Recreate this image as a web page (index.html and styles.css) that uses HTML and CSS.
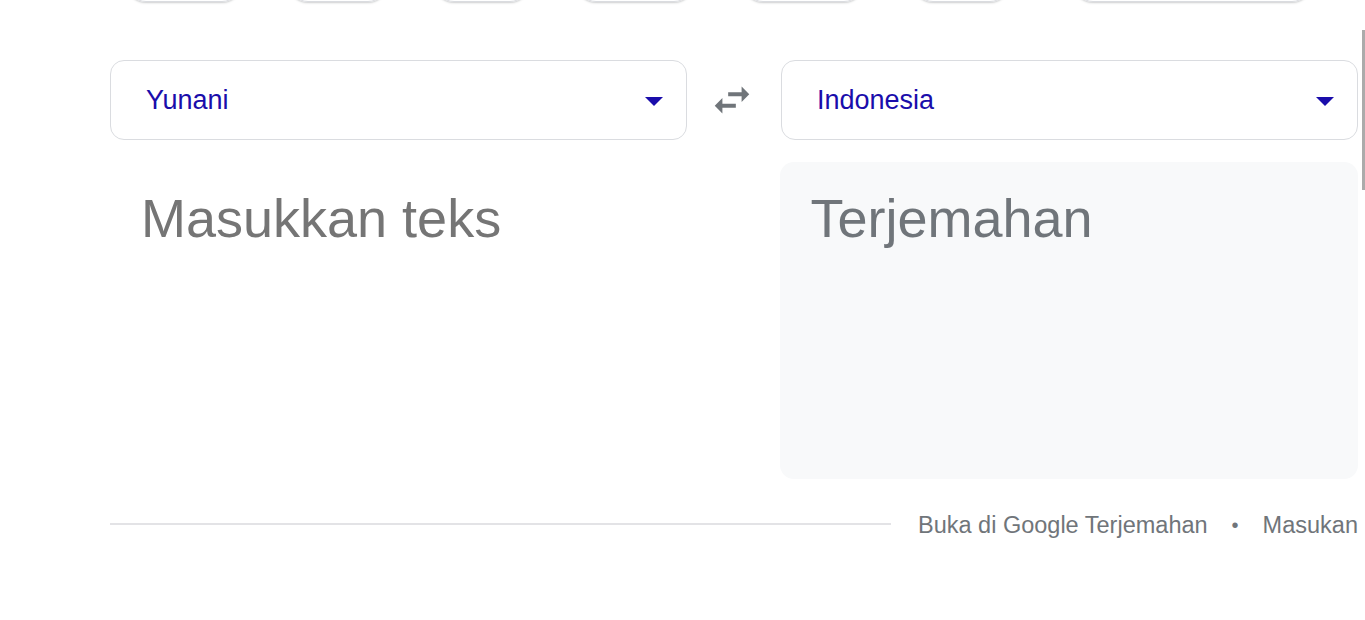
FILE: index.html
```html
<!DOCTYPE html>
<html lang="id">
<head>
<meta charset="utf-8">
<title>Terjemahan</title>
<link rel="stylesheet" href="styles.css">
</head>
<body>
<div class="page">
  <div class="chips">
    <div class="chip c1"></div>
    <div class="chip c2"></div>
    <div class="chip c3"></div>
    <div class="chip c4"></div>
    <div class="chip c5"></div>
    <div class="chip c6"></div>
    <div class="chip c7"></div>
  </div>

  <div class="langs">
    <div class="select">
      <span class="lang">Yunani</span>
      <span class="caret"></span>
    </div>
    <div class="swap">
      <svg width="46" height="46" viewBox="0 0 24 24"><path fill="#70757a" d="M6.99 11L3 15l3.99 4v-3H14v-2H6.99v-3zM21 9l-3.99-4v3H10v2h7.01v3L21 9z"/></svg>
    </div>
    <div class="select">
      <span class="lang">Indonesia</span>
      <span class="caret"></span>
    </div>
  </div>

  <div class="panels">
    <div class="panel source"><span class="placeholder">Masukkan teks</span></div>
    <div class="gap"></div>
    <div class="panel target"><span class="placeholder out">Terjemahan</span></div>
  </div>

  <div class="footer">
    <div class="rule"></div>
    <span class="link">Buka di Google Terjemahan</span>
    <span class="dot">•</span>
    <span class="link">Masukan</span>
  </div>
</div>
<div class="thumb"></div>
</body>
</html>
```

FILE: styles.css
```css
html, body {
  margin: 0;
  padding: 0;
  background: #fff;
  overflow: hidden;
  font-family: "Liberation Sans", Arial, sans-serif;
}

.page {
  width: 1248px;
  padding-left: 110px;
}

.chips {
  display: flex;
  gap: 46px;
  height: 40px;
  margin-top: -38px;
  padding-left: 16px;
}

.chip {
  height: 40px;
  box-sizing: border-box;
  border: 1px solid #dadce0;
  border-radius: 20px;
  box-shadow: 0 1px 2px rgba(60, 64, 67, 0.25);
}
.c1 { width: 116px; }
.c2 { width: 100px; }
.c3 { width: 96px; }
.c4 { width: 118px; }
.c5 { width: 121px; margin-left: 3px; }
.c6 { width: 97px; margin-left: 3px; }
.c7 { width: 239px; margin-left: 17px; }

.langs {
  display: flex;
  align-items: center;
  margin-top: 58px;
}

.select {
  width: 578px;
  height: 80px;
  box-sizing: border-box;
  border: 1.5px solid #dadce0;
  border-radius: 14px;
  display: flex;
  align-items: center;
  justify-content: space-between;
  padding: 0 23px 0 35px;
}

.lang {
  font-size: 27px;
  color: #1a0dab;
}

.caret {
  width: 0;
  height: 0;
  border-left: 9.5px solid transparent;
  border-right: 9.5px solid transparent;
  border-top: 9px solid #1a0dab;
  margin-top: 2px;
}

.swap {
  width: 94px;
  display: flex;
  justify-content: center;
  margin-left: -2px;
  margin-right: 2px;
}
.swap svg { display: block; }

.panels {
  display: flex;
  margin-top: 22px;
}

.panel {
  width: 578px;
  height: 317px;
  box-sizing: border-box;
  border-radius: 14px;
  padding: 25px 30px;
}
.gap { width: 93px; }
.source { padding-left: 31px; }
.target { background: #f8f9fa; }

.placeholder {
  display: block;
  font-size: 54px;
  line-height: 62px;
  color: #757575;
}
.placeholder.out { color: #70757a; }

.footer {
  display: flex;
  align-items: center;
  height: 40px;
  margin-top: 25px;
  white-space: nowrap;
}

.rule {
  width: 781px;
  height: 2px;
  background: #e3e3e6;
  flex: none;
  margin-right: 27px;
}

.link {
  font-size: 23.5px;
  color: #70757a;
  padding-top: 3px;
}

.dot {
  font-size: 20px;
  color: #70757a;
  margin: 0 24px;
  padding-top: 3px;
}

.thumb {
  position: fixed;
  right: 0;
  top: 30px;
  width: 3px;
  height: 160px;
  background: #ababab;
}
```
